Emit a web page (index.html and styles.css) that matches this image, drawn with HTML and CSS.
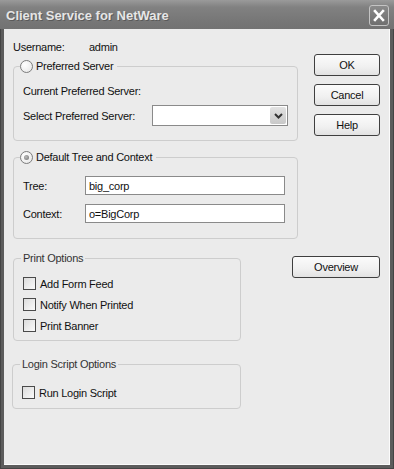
FILE: index.html
```html
<!doctype html>
<html lang="en">
    <head>
        <meta charset="UTF-8" />
        <title>Client Service for NetWare</title>
        <link rel="stylesheet" href="styles.css">
    </head>
    <body>
        <div class="window">
            <div class="titlebar">
                <span class="title">Client Service for NetWare</span>
                <span class="close">
                    <svg width="18" height="19" viewBox="0 0 18 19">
                        <path d="M5 5 L13 14 M13 5 L5 14" stroke="#fff" stroke-width="2.6" stroke-linecap="square" fill="none" />
                    </svg>
                </span>
            </div>
            <div class="client">
                <div class="left">
                    <!-- Username -->
                    <div class="user-row">
                        <span class="user-label">Username:</span>
                        <span>admin</span>
                    </div>

                    <!-- Preferred Server -->
                    <fieldset class="group group-server">
                        <legend class="radio-legend">
                            <input type="radio" name="mode" class="radio" />
                            <span>Preferred Server</span>
                        </legend>
                        <div class="text-row first">Current Preferred Server:</div>
                        <div class="field-row select-row">
                            <span class="field-label wide">Select Preferred Server:</span>
                            <div class="combo">
                                <span class="combo-field"></span>
                                <span class="combo-arrow">
                                    <svg width="9" height="6" viewBox="0 0 9 6">
                                        <path d="M1 1 L4.5 4.5 L8 1" stroke="#333" stroke-width="2" fill="none" />
                                    </svg>
                                </span>
                            </div>
                        </div>
                    </fieldset>

                    <!-- Default Tree and Context -->
                    <fieldset class="group group-tree">
                        <legend class="radio-legend">
                            <input type="radio" name="mode" class="radio" checked />
                            <span>Default Tree and Context</span>
                        </legend>
                        <div class="field-row first">
                            <span class="field-label">Tree:</span>
                            <input type="text" class="text-input" value="big_corp" />
                        </div>
                        <div class="field-row second">
                            <span class="field-label">Context:</span>
                            <input type="text" class="text-input" value="o=BigCorp" />
                        </div>
                    </fieldset>

                    <!-- Print Options -->
                    <fieldset class="group group-print">
                        <legend class="text-legend">Print Options</legend>
                        <div class="checks">
                            <label class="check-row"><input type="checkbox" class="check" />Add Form Feed</label>
                            <label class="check-row"><input type="checkbox" class="check" />Notify When Printed</label>
                            <label class="check-row"><input type="checkbox" class="check" />Print Banner</label>
                        </div>
                    </fieldset>

                    <!-- Login Script Options -->
                    <fieldset class="group group-login">
                        <legend class="text-legend">Login Script Options</legend>
                        <div class="checks">
                            <label class="check-row"><input type="checkbox" class="check" />Run Login Script</label>
                        </div>
                    </fieldset>
                </div>

                <div class="right">
                    <button class="button" type="button">OK</button>
                    <button class="button" type="button">Cancel</button>
                    <button class="button" type="button">Help</button>
                    <button class="button overview" type="button">Overview</button>
                </div>
            </div>
        </div>
    </body>
</html>
```

FILE: styles.css
```css
body {
    margin: 0;
    font-family: "Liberation Sans", Arial, sans-serif;
    font-size: 11px;
    letter-spacing: -0.25px;
    color: #111;
    background: #5a5a5a;
}
.window {
    width: 394px;
    height: 469px;
    display: flex;
    flex-direction: column;
    background: #5c5c5c;
    box-shadow: inset 0 0 0 1px #444;
}
.titlebar {
    height: 29px;
    box-sizing: border-box;
    padding: 2px 5px 0 6px;
    display: flex;
    align-items: center;
    justify-content: space-between;
    background: linear-gradient(#9a9a9a, #818181 25%, #777 70%, #727272);
}
.title {
    font-weight: bold;
    font-size: 13px;
    letter-spacing: 0;
    color: #e6e6e6;
    text-shadow: 1px 1px 0 #5a5a5a;
}
.close {
    width: 18px;
    height: 19px;
    border: 1px solid #c4c4c4;
    border-radius: 3px;
    background: linear-gradient(#8a8a8a, #6f6f6f);
    display: flex;
}
.client {
    flex: 1;
    margin: 0 4px 4px 4px;
    background: #ebebeb;
    border-right: 1px solid #fbfbfb;
    border-bottom: 1px solid #fbfbfb;
    display: flex;
}
.left {
    width: 296px;
    flex: none;
    padding: 11px 0 0 9px;
    box-sizing: border-box;
}
.user-row {
    display: flex;
    line-height: 14px;
    height: 14px;
}
.user-label {
    width: 76px;
}
.group {
    margin: 0;
    padding: 0;
    border: 1px solid #cdcdcd;
    border-radius: 4px;
    min-width: 0;
    width: 285px;
    box-sizing: border-box;
}
.radio-legend {
    margin-left: 6px;
    padding: 0 4px 0 0;
    height: 14px;
    line-height: 14px;
    display: flex;
    align-items: center;
    gap: 3px;
}
.text-legend {
    margin-left: 7px;
    padding: 0 2px;
    height: 14px;
    line-height: 14px;
    color: #333;
}
.group-server {
    margin-top: 5px;
    padding-bottom: 14px;
}
.group-tree {
    margin-top: 9px;
    padding-bottom: 15px;
}
.group-print {
    margin-top: 12px;
    width: 228px;
    padding-bottom: 8px;
}
.group-login {
    margin-top: 16px;
    margin-left: -1px;
    width: 229px;
    padding-bottom: 9px;
}
.text-row {
    padding-left: 9px;
    line-height: 14px;
}
.text-row.first {
    margin-top: 11px;
}
.field-row {
    display: flex;
    align-items: center;
    padding-left: 9px;
}
.select-row {
    margin-top: 7px;
}
.group-tree .field-row.first {
    margin-top: 12px;
}
.group-tree .field-row.second {
    margin-top: 9px;
}
.field-label {
    width: 62px;
}
.field-label.wide {
    width: 129px;
}
.combo {
    width: 136px;
    height: 21px;
    box-sizing: border-box;
    border: 1px solid #8a8a8a;
    background: white;
    display: flex;
    align-items: center;
    padding: 1px;
}
.combo-field {
    flex: 1;
}
.combo-arrow {
    width: 16px;
    height: 17px;
    border-radius: 2px;
    background: linear-gradient(#e2e2e2, #c8c8c8);
    display: flex;
    align-items: center;
    justify-content: center;
}
.text-input {
    width: 200px;
    height: 19px;
    box-sizing: border-box;
    margin: 0;
    padding: 0 3px;
    border: 1px solid #8a8a8a;
    background: white;
    font-family: "Liberation Sans", Arial, sans-serif;
    font-size: 11px;
    letter-spacing: -0.25px;
    color: #111;
    outline: none;
}
.radio {
    appearance: none;
    margin: 0;
    width: 13px;
    height: 13px;
    border: 1px solid #7c7c7c;
    border-radius: 50%;
    box-sizing: border-box;
    background: radial-gradient(circle at 35% 35%, #fff, #e4e4e4);
    display: flex;
    align-items: center;
    justify-content: center;
}
.radio:checked::after {
    content: "";
    width: 5px;
    height: 5px;
    border-radius: 50%;
    background: radial-gradient(circle at 40% 40%, #bbb, #707070);
}
.checks {
    display: flex;
    flex-direction: column;
    gap: 8px;
    padding-left: 9px;
    margin-top: 12px;
}
.group-login .checks {
    margin-top: 15px;
}
.check-row {
    display: flex;
    align-items: center;
    height: 13px;
    gap: 4px;
}
.check {
    appearance: none;
    margin: 0;
    width: 13px;
    height: 13px;
    box-sizing: border-box;
    border: 1px solid #4a4a4a;
    background: linear-gradient(135deg, #dcdcdc, #fafafa);
}
.right {
    flex: 1;
    min-width: 0;
    display: flex;
    flex-direction: column;
    align-items: flex-end;
    gap: 8px;
    padding: 25px 9px 0 0;
}
.button {
    width: 66px;
    height: 22px;
    flex: none;
    margin: 0;
    padding: 0;
    border: 1px solid #3f3f3f;
    border-radius: 3px;
    background: linear-gradient(#fbfbfb, #f0f0f0 60%, #e2e2e2);
    font-family: "Liberation Sans", Arial, sans-serif;
    font-size: 11px;
    letter-spacing: -0.25px;
    color: #111;
}
.button.overview {
    width: 88px;
    margin-top: 112px;
}
```
